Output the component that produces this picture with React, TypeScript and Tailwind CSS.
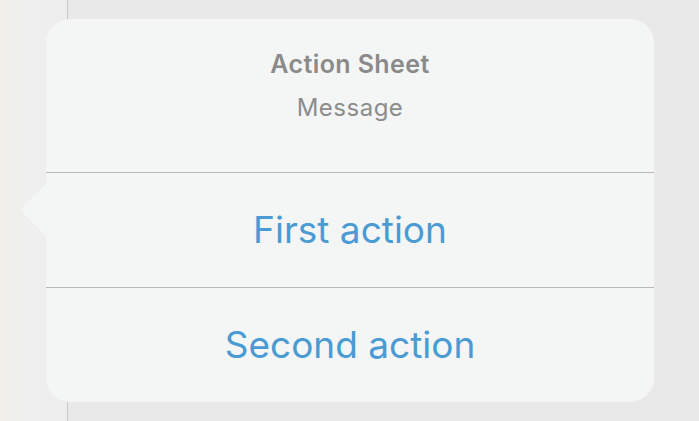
export default function App() {
  return (
    <div className="relative flex h-[421px] w-[699px] overflow-hidden bg-[#e9e9e9] font-['Inter',sans-serif]">
      <div className="h-full w-[68px] border-r border-[#c9c9c9] bg-gradient-to-r from-[#f0efea] via-[#efefef] to-[#ededed]" />
      <div className="flex-1" />

      {/* popover */}
      <div className="absolute left-[20px] top-[19px] flex">
        <svg width="27" height="60" viewBox="0 0 27 60" className="mt-[162px] -mr-px">
          <path d="M27 2 L3 26 Q0 29 3 32 L27 56 Z" fill="#f4f5f5" />
        </svg>
        <div className="flex h-[383px] w-[608px] flex-col overflow-hidden rounded-[24px] bg-[#f4f5f5]">
          <div className="flex h-[154px] flex-col items-center border-b border-[#b9b9b9] pt-[29px]">
            <div className="text-[25px] font-semibold leading-[32px] tracking-[0.4px] text-[#8a8a8a]">Action Sheet</div>
            <div className="mt-[12px] text-[24px] leading-[32px] tracking-[0.5px] text-[#8c8c8c]">Message</div>
          </div>
          <button className="flex h-[115px] items-center justify-center border-b border-[#b9b9b9] text-[37px] text-[#4a9bd3]">
            First action
          </button>
          <button className="flex flex-1 items-center justify-center text-[37px] text-[#4a9bd3]">
            Second action
          </button>
        </div>
      </div>
    </div>
  );
}
